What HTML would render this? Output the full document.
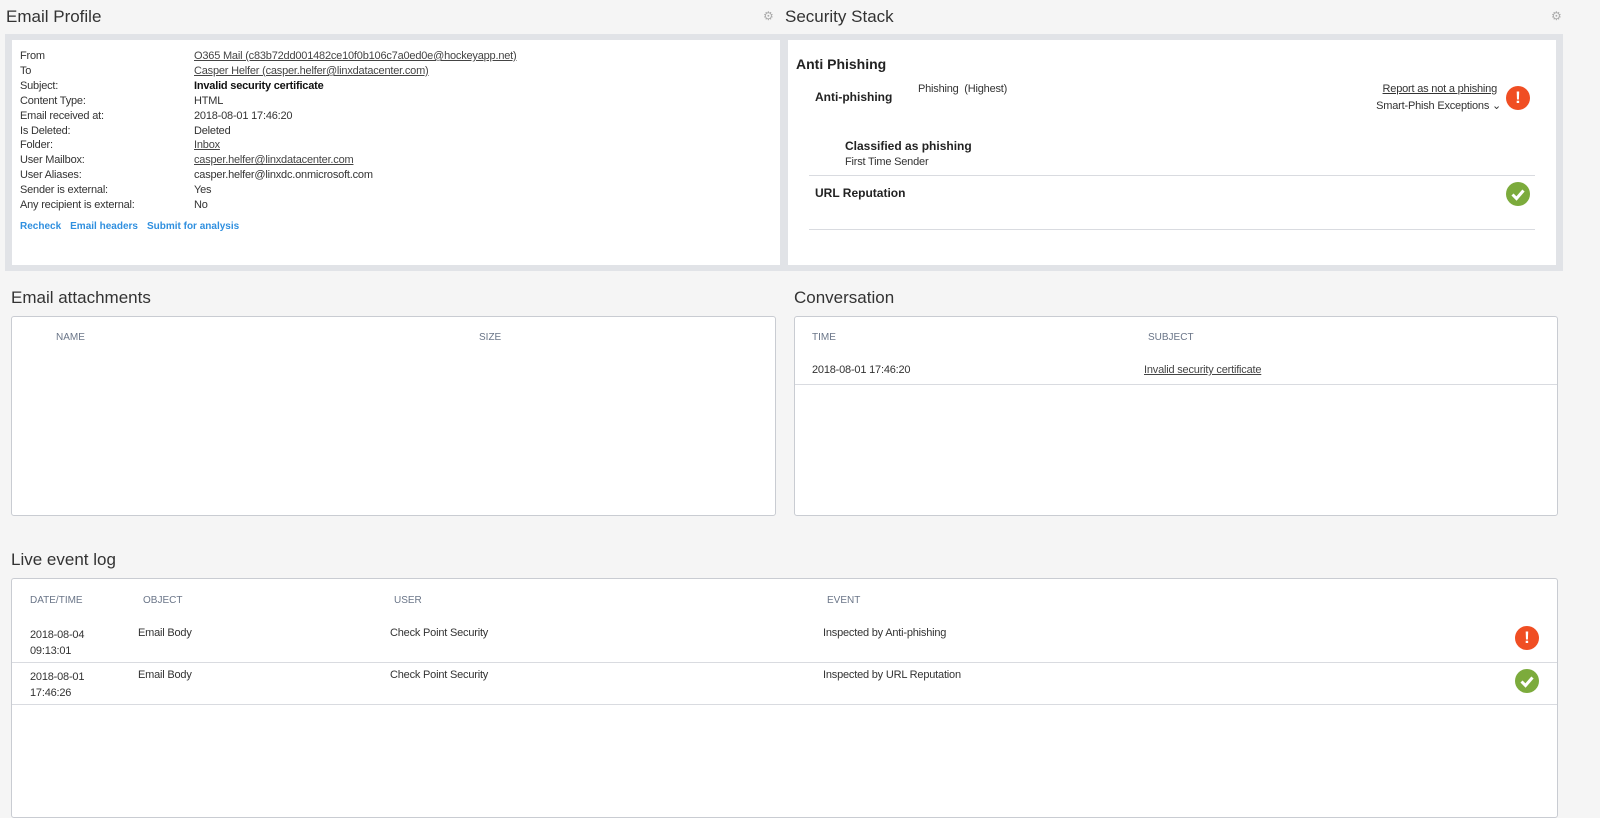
<!DOCTYPE html>
<html><head><style>
*{margin:0;padding:0;box-sizing:border-box}
body{width:1600px;height:797px;overflow:hidden;background:#f5f5f5;font-family:"Liberation Sans",sans-serif;color:#333;position:relative}
.a{position:absolute;white-space:nowrap}
.s{font-size:11px;letter-spacing:-0.2px}
.h{font-size:17px;color:#333}
.th{font-size:10px;color:#6a7588;letter-spacing:0}
.u{text-decoration:underline;color:#444}
.b{font-weight:bold;color:#222}
.box{position:absolute;background:#fff;border:1px solid #c9ccd2;border-radius:3px}
.ln{position:absolute;height:1px;background:#d9dbe0}
.ic{position:absolute;width:24px;height:24px;border-radius:50%;color:#fff;text-align:center;font-weight:bold}
.red{background:#f04e23;font-size:17px;line-height:24px}
.grn{background:#7cab3c}
.gear{position:absolute;font-size:12px;color:#aaa}
</style></head><body>
<div class="a h" style="left:6px;top:7px">Email Profile</div>
<div class="gear" style="left:763px;top:9px">⚙</div>
<div class="a h" style="left:785px;top:7px">Security Stack</div>
<div class="gear" style="left:1551px;top:9px">⚙</div>

<div style="position:absolute;left:5px;top:34px;width:1558px;height:237px;background:#e1e3e7"></div>
<div style="position:absolute;left:12px;top:40px;width:768px;height:225px;background:#fff"></div>
<div style="position:absolute;left:788px;top:40px;width:768px;height:225px;background:#fff"></div>

<div class="s" style="position:absolute;left:20px;top:49px;line-height:14.9px;color:#333">
From<br>To<br>Subject:<br>Content Type:<br>Email received at:<br>Is Deleted:<br>Folder:<br>User Mailbox:<br>User Aliases:<br>Sender is external:<br>Any recipient is external:</div>
<div class="s" style="position:absolute;left:194px;top:49px;line-height:14.9px;color:#333;white-space:nowrap">
<span class="u">O365 Mail (c83b72dd001482ce10f0b106c7a0ed0e@hockeyapp.net)</span><br><span class="u">Casper Helfer (casper.helfer@linxdatacenter.com)</span><br><b style="color:#111">Invalid security certificate</b><br>HTML<br>2018-08-01 17:46:20<br>Deleted<br><span class="u">Inbox</span><br><span class="u">casper.helfer@linxdatacenter.com</span><br>casper.helfer@linxdc.onmicrosoft.com<br>Yes<br>No</div>
<div class="a" style="left:20px;top:221px;font-size:10px;color:#2f8fdf;font-weight:bold">Recheck<span style="margin-left:9px">Email headers</span><span style="margin-left:9px">Submit for analysis</span></div>

<div class="a b" style="left:796px;top:56px;font-size:14px">Anti Phishing</div>
<div class="a b" style="left:815px;top:90px;font-size:12px">Anti-phishing</div>
<div class="a s" style="left:918px;top:83px">Phishing &nbsp;(Highest)</div>
<div class="a s u" style="right:103px;top:83px;color:#333">Report as not a phishing</div>
<div class="a s" style="right:99px;top:99px">Smart-Phish Exceptions ⌄</div>
<div class="ic red" style="left:1506px;top:86px">!</div>
<div class="a b" style="left:845px;top:139px;font-size:12px">Classified as phishing</div>
<div class="a s" style="left:845px;top:156px">First Time Sender</div>
<div class="ln" style="left:809px;top:175px;width:726px"></div>
<div class="a b" style="left:815px;top:186px;font-size:12px">URL Reputation</div>
<div class="ic grn" style="left:1506px;top:182px"><svg width="24" height="24"><path d="M6.5 12.5l4 4 7-8" stroke="#fff" stroke-width="3" fill="none"/></svg></div>
<div class="ln" style="left:809px;top:229px;width:726px"></div>

<div class="a h" style="left:11px;top:288px">Email attachments</div>
<div class="box" style="left:11px;top:316px;width:765px;height:200px"></div>
<div class="a th" style="left:56px;top:332px">NAME</div>
<div class="a th" style="left:479px;top:332px">SIZE</div>

<div class="a h" style="left:794px;top:288px">Conversation</div>
<div class="box" style="left:794px;top:316px;width:764px;height:200px"></div>
<div class="a th" style="left:812px;top:332px">TIME</div>
<div class="a th" style="left:1148px;top:332px">SUBJECT</div>
<div class="a s" style="left:812px;top:364px">2018-08-01 17:46:20</div>
<div class="a s u" style="left:1144px;top:364px">Invalid security certificate</div>
<div class="ln" style="left:795px;top:384px;width:762px"></div>

<div class="a h" style="left:11px;top:550px">Live event log</div>
<div class="box" style="left:11px;top:578px;width:1547px;height:240px"></div>
<div class="a th" style="left:30px;top:595px">DATE/TIME</div>
<div class="a th" style="left:143px;top:595px">OBJECT</div>
<div class="a th" style="left:394px;top:595px">USER</div>
<div class="a th" style="left:827px;top:595px">EVENT</div>
<div class="a s" style="left:30px;top:627px;line-height:16px">2018-08-04<br>09:13:01</div>
<div class="a s" style="left:138px;top:627px">Email Body</div>
<div class="a s" style="left:390px;top:627px">Check Point Security</div>
<div class="a s" style="left:823px;top:627px">Inspected by Anti-phishing</div>
<div class="ic red" style="left:1515px;top:626px">!</div>
<div class="ln" style="left:12px;top:662px;width:1545px"></div>
<div class="a s" style="left:30px;top:669px;line-height:16px">2018-08-01<br>17:46:26</div>
<div class="a s" style="left:138px;top:669px">Email Body</div>
<div class="a s" style="left:390px;top:669px">Check Point Security</div>
<div class="a s" style="left:823px;top:669px">Inspected by URL Reputation</div>
<div class="ic grn" style="left:1515px;top:669px"><svg width="24" height="24"><path d="M6.5 12.5l4 4 7-8" stroke="#fff" stroke-width="3" fill="none"/></svg></div>
<div class="ln" style="left:12px;top:704px;width:1545px"></div>
</body></html>
